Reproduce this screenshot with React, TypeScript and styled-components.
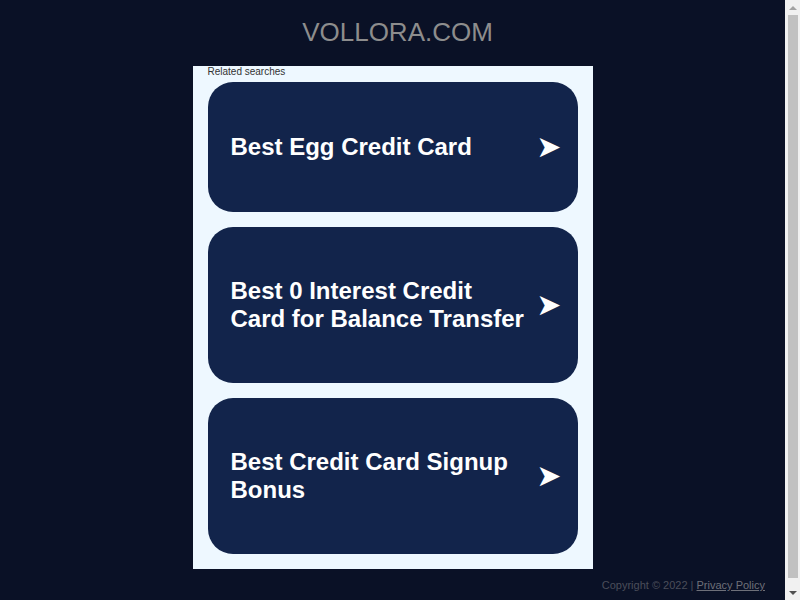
import React from 'react'
import styled, { createGlobalStyle } from 'styled-components'

const GlobalStyle = createGlobalStyle`
  html, body {
    margin: 0;
    padding: 0;
    overflow: hidden;
    background: #0a1126;
    font-family: "Liberation Sans", Arial, sans-serif;
  }
`

const Frame = styled.div`
  display: flex;
  height: 100vh;
`

const Page = styled.div`
  flex: 1;
  display: flex;
  flex-direction: column;
  align-items: center;
  overflow: hidden;

  & > * {
    flex-shrink: 0;
  }
`

const Header = styled.h1`
  margin: 0;
  padding-left: 10px;
  height: 66px;
  line-height: 64px;
  font-size: 26px;
  font-weight: normal;
  color: #8d8d8d;
  text-align: center;
`

const Panel = styled.div`
  width: 370px;
  padding: 0 15px 15px;
  background: #eef8ff;
  display: flex;
  flex-direction: column;
`

const Caption = styled.div`
  font-size: 10px;
  line-height: 12px;
  height: 16px;
  color: #333;
`

const CardList = styled.div`
  display: flex;
  flex-direction: column;
  gap: 15px;
`

const Card = styled.a<{ $lines: number }>`
  display: flex;
  align-items: center;
  justify-content: space-between;
  box-sizing: border-box;
  height: ${(p) => (p.$lines > 1 ? 156 : 130)}px;
  padding: 0 16px 0 23px;
  border-radius: 25px;
  background: #12244b;
  color: #fff;
  text-decoration: none;
  cursor: pointer;
`

const CardText = styled.span`
  font-size: 24px;
  font-weight: bold;
  line-height: 28px;
  padding-right: 10px;
`

const Arrow = styled.span`
  font-size: 30px;
  line-height: 1;
  flex-shrink: 0;
  font-family: "DejaVu Sans", sans-serif;
`

const Footer = styled.div`
  align-self: stretch;
  box-sizing: border-box;
  padding: 10px 20px 15px;
  text-align: right;
  font-size: 11px;
  line-height: 13px;
  color: #4a4e5a;

  a {
    color: #6e7079;
    text-decoration: underline;
  }
`

const Scrollbar = styled.div`
  width: 15px;
  flex-shrink: 0;
  background: #f1f1f1;
  display: flex;
  flex-direction: column;
`

const ScrollButton = styled.div<{ $dir: 'up' | 'down' }>`
  height: 15px;
  display: flex;
  align-items: center;
  justify-content: center;

  &::after {
    content: '';
    width: 0;
    height: 0;
    border-left: 4px solid transparent;
    border-right: 4px solid transparent;
    ${(p) =>
      p.$dir === 'up'
        ? 'border-bottom: 4px solid #a3a3a3;'
        : 'border-top: 4px solid #505050;'}
  }
`

const Track = styled.div`
  flex: 1;
  display: flex;
  justify-content: center;
  padding-bottom: 7px;
`

const Thumb = styled.div`
  width: 10px;
  margin-left: 1px;
  background: #c1c1c1;
`

const searches = [
  { label: 'Best Egg Credit Card', lines: 1 },
  { label: 'Best 0 Interest Credit Card for Balance Transfer', lines: 2 },
  { label: 'Best Credit Card Signup Bonus', lines: 2 }
]

export default function App() {
  return (
    <>
      <GlobalStyle />
      <Frame>
        <Page>
          <Header>VOLLORA.COM</Header>
          <Panel>
            <Caption>Related searches</Caption>
            <CardList>
              {searches.map((s) => (
                <Card key={s.label} $lines={s.lines}>
                  <CardText>{s.label}</CardText>
                  <Arrow>➤</Arrow>
                </Card>
              ))}
            </CardList>
          </Panel>
          <Footer>
            Copyright © 2022 | <a href="#">Privacy Policy</a>
          </Footer>
        </Page>
        <Scrollbar>
          <ScrollButton $dir="up" />
          <Track>
            <Thumb />
          </Track>
          <ScrollButton $dir="down" />
        </Scrollbar>
      </Frame>
    </>
  )
}
